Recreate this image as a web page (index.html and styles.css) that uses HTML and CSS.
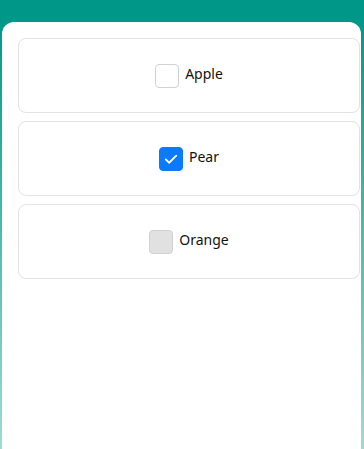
FILE: index.html
```html
<!DOCTYPE html>
<html>
<head>
<meta charset="utf-8">
<link rel="stylesheet" href="styles.css">
</head>
<body>
<div class="panel">
  <label class="card">
    <span class="box"></span>
    <span class="label">Apple</span>
  </label>
  <label class="card">
    <span class="box checked">
      <svg viewBox="0 0 24 24" width="18" height="18"><path d="M5 12.5l4.5 4.5L19 7.5" fill="none" stroke="#fff" stroke-width="2.4" stroke-linecap="round" stroke-linejoin="round"/></svg>
    </span>
    <span class="label">Pear</span>
  </label>
  <label class="card">
    <span class="box disabled"></span>
    <span class="label">Orange</span>
  </label>
</div>
</body>
</html>
```

FILE: styles.css
```css
html, body {
  margin: 0;
  height: 100%;
}
body {
  background: linear-gradient(#009688 0%, #009688 3%, #a0dbd4 100%);
  font-family: "Noto Sans", "Open Sans", sans-serif;
  overflow: hidden;
}
.panel {
  margin: 22px 3px 0 2px;
  background: #fff;
  border-radius: 12px 12px 0 0;
  height: calc(100% - 22px);
  box-sizing: border-box;
  padding: 16px 1px 0 16px;
  display: flex;
  flex-direction: column;
  gap: 8px;
}
.card {
  height: 75px;
  box-sizing: border-box;
  border: 1px solid #e3e3e3;
  border-radius: 8px;
  display: flex;
  align-items: center;
  justify-content: center;
  gap: 6px;
}
.box {
  width: 24px;
  height: 24px;
  box-sizing: border-box;
  border: 1px solid #d1d1d1;
  border-radius: 4px;
  background: #fff;
  display: flex;
  align-items: center;
  justify-content: center;
}
.box.checked {
  background: #0a7aff;
  border-color: #0a7aff;
}
.box.disabled {
  background: #e1e1e1;
  border-color: #d1d1d1;
}
.label {
  font-size: 14px;
  color: #111;
  line-height: 20px;
  margin-bottom: 4px;
}
```
